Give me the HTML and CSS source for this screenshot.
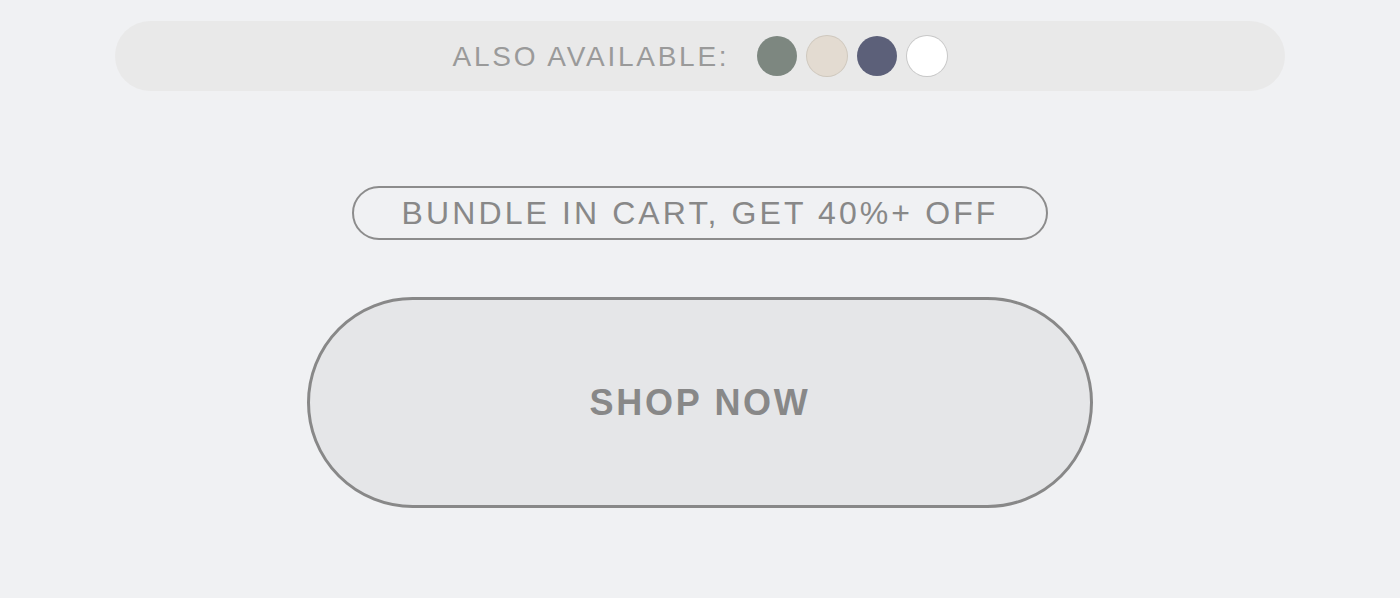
FILE: index.html
```html
<!DOCTYPE html>
<html lang="en">
<head>
    <meta charset="UTF-8">
    <meta name="viewport" content="width=device-width, initial-scale=1.0">
    <title>Shop</title>
    <link rel="stylesheet" href="styles.css">
</head>
<body>
    <div class="page">
        <div class="colors-bar">
            <span class="colors-label">ALSO AVAILABLE:</span>
            <div class="swatches">
                <span class="swatch sage"></span>
                <span class="swatch sand"></span>
                <span class="swatch navy"></span>
                <span class="swatch white"></span>
            </div>
        </div>

        <div class="bundle">BUNDLE IN CART, GET 40%+ OFF</div>

        <button class="shop-btn">SHOP NOW</button>
    </div>
</body>
</html>
```

FILE: styles.css
```css
body {
    margin: 0;
    padding: 0;
    background-color: #f0f1f3;
    font-family: "Liberation Sans", Arial, sans-serif;
}

.page {
    display: flex;
    flex-direction: column;
    align-items: center;
    padding-top: 21px;
}

.colors-bar {
    width: 1170px;
    height: 70px;
    border-radius: 35px;
    background: #e9e9e9;
    display: flex;
    justify-content: center;
    align-items: center;
    gap: 28px;
}

.colors-label {
    font-size: 28px;
    letter-spacing: 2.75px;
    color: #9a9a9a;
    padding-top: 1px;
}

.swatches {
    display: flex;
    gap: 10px;
}

.swatch {
    width: 40px;
    height: 40px;
    border-radius: 50%;
}

.sage { background: #7d8780; }
.sand { background: #e3dbd1; box-shadow: 0 0 0 1px #cfc8be; }
.navy { background: #5c6079; }
.white { background: #ffffff; box-shadow: 0 0 0 1px #c8c8c8; }

.bundle {
    margin-top: 95px;
    width: 696px;
    height: 54px;
    box-sizing: border-box;
    border: 2px solid #8c8c8c;
    border-radius: 27px;
    display: flex;
    justify-content: center;
    align-items: center;
    font-size: 32px;
    letter-spacing: 3.1px;
    color: #888;
}

.shop-btn {
    margin-top: 57px;
    width: 786px;
    height: 211px;
    box-sizing: border-box;
    border: 3px solid #888;
    border-radius: 106px;
    background: #e5e6e8;
    font-family: "Liberation Sans", Arial, sans-serif;
    font-size: 36px;
    font-weight: bold;
    letter-spacing: 2.7px;
    color: #888;
    cursor: pointer;
}
```
